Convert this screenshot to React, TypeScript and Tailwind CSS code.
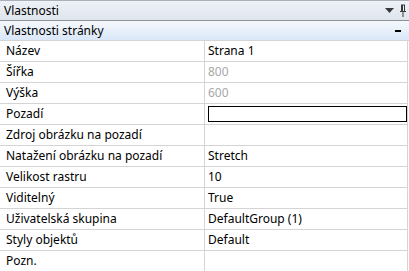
import React from "react";

const rows: { label: string; value: string; kind?: "disabled" | "box" }[] = [
  { label: "Název", value: "Strana 1" },
  { label: "Šířka", value: "800", kind: "disabled" },
  { label: "Výška", value: "600", kind: "disabled" },
  { label: "Pozadí", value: "", kind: "box" },
  { label: "Zdroj obrázku na pozadí", value: "" },
  { label: "Natažení obrázku na pozadí", value: "Stretch" },
  { label: "Velikost rastru", value: "10" },
  { label: "Viditelný", value: "True" },
  { label: "Uživatelská skupina", value: "DefaultGroup (1)" },
  { label: "Styly objektů", value: "Default" },
  { label: "Pozn.", value: "" },
];

export default function App() {
  return (
    <div
      className="w-[409px] h-[271px] overflow-hidden bg-white text-[12px] text-black flex flex-col"
      style={{ fontFamily: '"Noto Sans", "Open Sans", sans-serif' }}
    >
      <div className="h-[21px] shrink-0 flex items-center justify-between border-t border-b border-t-[#a9b0b9] border-b-[#8d939b] bg-gradient-to-b from-[#eef2f7] to-[#dfe5ee] pl-[4px] pr-[2px]">
        <span className="leading-none">Vlastnosti</span>
        <div className="flex items-center gap-[5px]">
          <svg width="9" height="5" viewBox="0 0 9 5">
            <path d="M0 0h9L4.5 5z" fill="#3a3a3a" />
          </svg>
          <svg width="8" height="13" viewBox="0 0 8 13">
            <path d="M2 1h4M2.5 1v6M5.5 1v6M1 7.5h6M4 8v5" stroke="#3a3a3a" strokeWidth="1" fill="none" />
            <rect x="2" y="1" width="2" height="6" fill="#3a3a3a" />
          </svg>
        </div>
      </div>
      <div className="h-[20px] shrink-0 flex items-center justify-between border-b border-[#d4d4d4] bg-gradient-to-b from-[#f6f9fd] to-[#d9e7f8] pl-[4px] pr-[8px]">
        <span className="leading-none">Vlastnosti stránky</span>
        <div className="w-[6px] h-[2px] bg-black" />
      </div>
      <div className="flex flex-col w-[408px] border-r border-[#d4d4d4]">
        {rows.map((r) => (
          <div key={r.label} className="h-[21px] shrink-0 flex border-b border-[#d4d4d4]">
            <div className="w-[205px] shrink-0 border-r border-[#d4d4d4] flex items-center pl-[6px]">
              <span className="leading-none">{r.label}</span>
            </div>
            <div className="flex-1 flex items-center pl-[3px] pr-[1px]">
              {r.kind === "box" ? (
                <div className="w-[199px] h-[16px] border border-black" />
              ) : (
                <span className={"leading-none " + (r.kind === "disabled" ? "text-[#a8a8a8]" : "")}>
                  {r.value}
                </span>
              )}
            </div>
          </div>
        ))}
      </div>
    </div>
  );
}
